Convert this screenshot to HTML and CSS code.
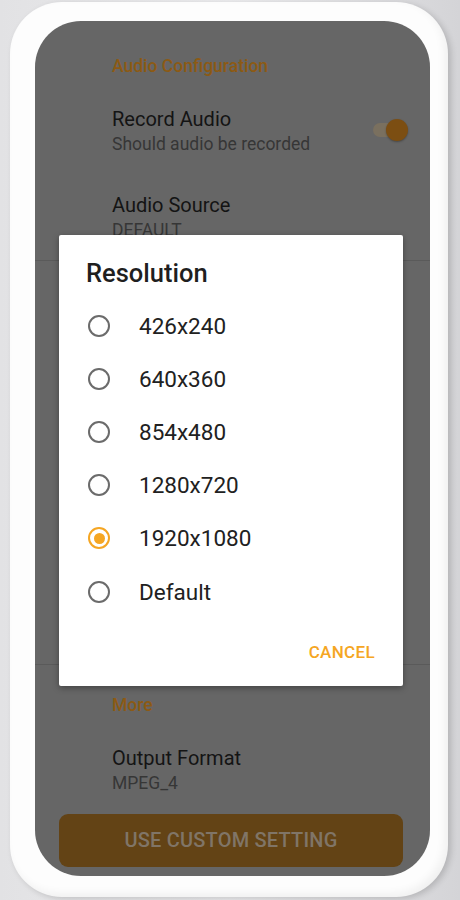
FILE: index.html
```html
<!DOCTYPE html>
<html>
  <head>
    <meta charset="UTF-8">
    <title>Resolution</title>
    <link rel="stylesheet" href="styles.css">
  </head>
  <body>

    <div class="phone">
      <div class="screen">

        <div class="section section-top">
          <div class="section-title">Audio Configuration</div>
          <div class="pref pref-switch">
            <div class="pref-text">
              <div class="pref-title">Record Audio</div>
              <div class="pref-sub">Should audio be recorded</div>
            </div>
            <div class="switch">
              <span class="switch-track"></span>
              <span class="switch-thumb"></span>
            </div>
          </div>
          <div class="pref">
            <div class="pref-title">Audio Source</div>
            <div class="pref-sub">DEFAULT</div>
          </div>
        </div>

        <div class="divider"></div>
        <div class="spacer"></div>
        <div class="divider"></div>

        <div class="section section-bottom">
          <div class="section-title">More</div>
          <div class="pref">
            <div class="pref-title">Output Format</div>
            <div class="pref-sub">MPEG_4</div>
          </div>
          <div class="custom-btn">USE CUSTOM SETTING</div>
        </div>

        <!-- dialog over the dimmed settings -->
        <div class="dialog">
          <div class="dialog-title">Resolution</div>
          <div class="options">
            <div class="option"><span class="radio"></span><span class="option-label">426x240</span></div>
            <div class="option"><span class="radio"></span><span class="option-label">640x360</span></div>
            <div class="option"><span class="radio"></span><span class="option-label">854x480</span></div>
            <div class="option"><span class="radio"></span><span class="option-label">1280x720</span></div>
            <div class="option"><span class="radio checked"></span><span class="option-label">1920x1080</span></div>
            <div class="option"><span class="radio"></span><span class="option-label">Default</span></div>
          </div>
          <div class="dialog-actions">
            <span class="cancel">CANCEL</span>
          </div>
        </div>

      </div>
    </div>

  </body>
</html>
```

FILE: styles.css
```css
* {
  margin: 0;
  padding: 0;
  box-sizing: border-box;
}

body {
  height: 900px;
  overflow: hidden;
  background: linear-gradient(90deg, #e2e2e4 0%, #ececee 50%, #d4d4d7 100%);
  font-family: Roboto, "Noto Sans", sans-serif;
}

.phone {
  width: 438px;
  height: 895px;
  margin: 2px 0 0 10px;
  padding: 19px 18px 21px 25px;
  background: #fdfdfd;
  border-radius: 52px;
  box-shadow: 3px 2px 6px rgba(0, 0, 0, 0.16), inset -4px -4px 8px rgba(0, 0, 0, 0.05);
}

.screen {
  position: relative;
  height: 100%;
  display: flex;
  flex-direction: column;
  background: #666666;
  border-radius: 46px;
  overflow: hidden;
}

.section-top { padding-top: 33px }
.section-bottom { padding-top: 28px }

.section-title {
  padding-left: 77px;
  line-height: 24px;
  font-size: 17.5px;
  font-weight: 500;
  color: #8c5a14;
  margin-bottom: 10px;
}

.pref {
  padding: 18px 22px 18px 77px;
}

.pref-switch {
  display: flex;
  align-items: center;
  justify-content: space-between;
}

.pref-title {
  line-height: 26px;
  font-size: 20px;
  color: #141414;
}

.pref-sub {
  line-height: 24px;
  font-size: 17.5px;
  color: #363636;
}

.switch {
  position: relative;
  width: 36px;
  height: 22px;
  margin-top: -3px;
}

.switch-track {
  position: absolute;
  left: 1px;
  top: 4px;
  width: 32px;
  height: 14px;
  border-radius: 7px;
  background: #7a705f;
}

.switch-thumb {
  position: absolute;
  right: 0;
  top: 0;
  width: 22px;
  height: 22px;
  border-radius: 50%;
  background: #7c4e12;
  box-shadow: 0 1px 2px rgba(0, 0, 0, 0.3);
}

.divider {
  height: 1px;
  background: #5a5a5a;
}

.spacer { flex: 1 }

.custom-btn {
  margin: 1px 27px 9px 24px;
  height: 53px;
  border-radius: 9px;
  background: #634315;
  color: #807567;
  font-size: 20px;
  font-weight: 500;
  line-height: 53px;
  text-align: center;
  letter-spacing: 0.01em;
}

.dialog {
  position: absolute;
  left: 24px;
  top: 214px;
  width: 344px;
  height: 451px;
  background: #ffffff;
  border-radius: 2px;
  box-shadow: 0 2px 6px rgba(0, 0, 0, 0.35);
  padding-top: 22px;
}

.dialog-title {
  padding-left: 27px;
  line-height: 32px;
  font-size: 25.5px;
  font-weight: 500;
  color: #1f1f1f;
}

.options { margin-top: 10px }

.option {
  display: flex;
  align-items: center;
  gap: 29px;
  height: 53.2px;
  padding-left: 29px;
}

.radio {
  position: relative;
  width: 22px;
  height: 22px;
  border: 2px solid #6b6b6b;
  border-radius: 50%;
}

.radio.checked { border-color: #f5a623 }

.radio.checked::after {
  content: "";
  position: absolute;
  left: 3.5px;
  top: 3.5px;
  width: 11px;
  height: 11px;
  border-radius: 50%;
  background: #f5a623;
}

.option-label {
  font-size: 22.5px;
  color: #212121;
}

.dialog-actions {
  display: flex;
  justify-content: flex-end;
  padding: 16px 28px 0 0;
}

.cancel {
  line-height: 36px;
  font-size: 17px;
  font-weight: 500;
  color: #f5a623;
  letter-spacing: 0.02em;
}
```
